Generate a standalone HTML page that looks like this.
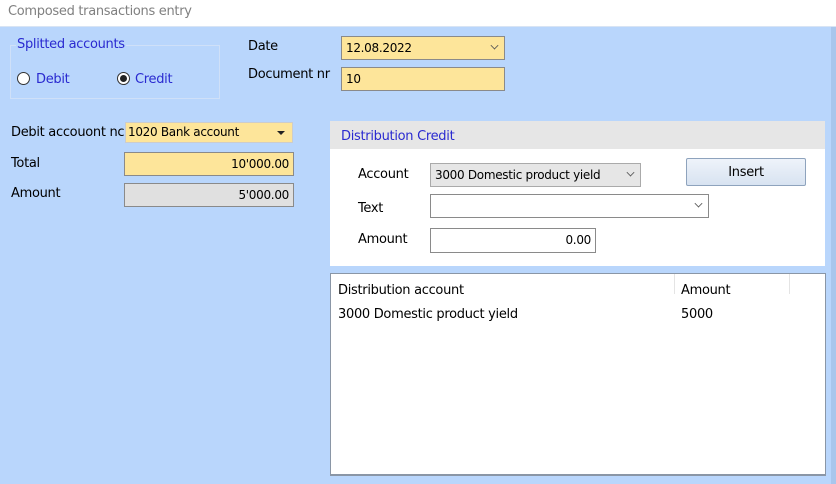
<!DOCTYPE html>
<html><head><meta charset="utf-8"><style>
*{margin:0;padding:0;box-sizing:border-box}
body{width:836px;height:484px;background:#b9d6fc;font-family:"DejaVu Sans","Liberation Sans",sans-serif;font-size:13px;color:#000;position:relative;overflow:hidden;letter-spacing:-0.3px}
.a{position:absolute;white-space:nowrap}
.title{left:0;top:0;width:836px;height:27px;background:#fff;border-bottom:1px solid #d8e4f4}
.box{position:absolute;border:1px solid #8a8a8a;font-size:12px;line-height:20px;padding:0 4px}
.y{background:#fde59a}
.blue{color:#2a2ad0}
.chev{position:absolute;right:6px;top:5px;width:7px;height:7px;border-right:1.2px solid #555;border-bottom:1.2px solid #555;transform:rotate(45deg) scale(.8)}
.rad{position:absolute;width:13px;height:13px;border:1px solid #333;border-radius:50%;background:#fff}
</style></head><body>
<div class="a title"></div>
<div class="a" style="left:8px;top:4px;color:#808080;font-size:13px">Composed transactions entry</div>
<div class="a" style="right:0;top:27px;width:5px;height:457px;background:#a9c6ec"></div>

<div class="a" style="left:10px;top:45px;width:210px;height:54px;border:1px solid #cfe0f8"></div>
<div class="a blue" style="left:16px;top:37px;background:#b9d6fc;padding:0 1px">Splitted accounts</div>
<div class="rad" style="left:17px;top:72px"></div>
<div class="a blue" style="left:36px;top:72px">Debit</div>
<div class="rad" style="left:117px;top:72px"><div style="position:absolute;left:2px;top:2px;width:7px;height:7px;border-radius:50%;background:#222"></div></div>
<div class="a blue" style="left:135px;top:72px">Credit</div>

<div class="a" style="left:248px;top:39px">Date</div>
<div class="box y" style="left:341px;top:36px;width:164px;height:24px;line-height:22px">12.08.2022<div class="chev"></div></div>
<div class="a" style="left:248px;top:67px">Document nr</div>
<div class="box y" style="left:341px;top:67px;width:164px;height:24px;line-height:22px">10</div>

<div class="a" style="left:11px;top:125px">Debit accouont nc</div>
<div class="box y" style="left:125px;top:122px;width:168px;height:21px;line-height:19px;padding-left:2px;border-color:#ccc">1020 Bank account<div style="position:absolute;right:7px;top:8px;border:4px solid transparent;border-top:4px solid #222;border-bottom:0"></div></div>
<div class="a" style="left:11px;top:156px">Total</div>
<div class="box y" style="left:124px;top:152px;width:170px;height:24px;line-height:22px;text-align:right">10'000.00</div>
<div class="a" style="left:11px;top:186px">Amount</div>
<div class="box" style="left:124px;top:183px;width:170px;height:24px;line-height:22px;text-align:right;background:#e0e0e0">5'000.00</div>

<div class="a" style="left:330px;top:121px;width:495px;height:145px;background:#fff"></div>
<div class="a" style="left:330px;top:121px;width:495px;height:28px;background:#e6e6e6"></div>
<div class="a blue" style="left:341px;top:129px">Distribution Credit</div>
<div class="a" style="left:358px;top:167px">Account</div>
<div class="box" style="left:430px;top:163px;width:211px;height:24px;line-height:22px;background:#e6e6e6;border-color:#aaa">3000 Domestic product yield<div class="chev"></div></div>
<div class="a" style="left:686px;top:158px;width:120px;height:28px;border:1px solid #8ea3bd;border-radius:2px;background:linear-gradient(#eef3fa,#d8e3f1);text-align:center;line-height:28px">Insert</div>
<div class="a" style="left:358px;top:201px">Text</div>
<div class="box" style="left:430px;top:194px;width:279px;height:24px;background:#fff"><div class="chev"></div></div>
<div class="a" style="left:358px;top:232px">Amount</div>
<div class="box" style="left:430px;top:228px;width:166px;height:25px;line-height:23px;text-align:right;background:#fff">0.00</div>

<div class="a" style="left:330px;top:273px;width:496px;height:203px;background:#fff;border:1px solid #8a96a6;border-bottom:2px solid #8a96a6"></div>
<div class="a" style="left:674px;top:274px;width:1px;height:20px;background:#e4e4e4"></div>
<div class="a" style="left:789px;top:274px;width:1px;height:20px;background:#e4e4e4"></div>
<div class="a" style="left:338px;top:283px">Distribution account</div>
<div class="a" style="left:681px;top:283px">Amount</div>
<div class="a" style="left:338px;top:307px">3000 Domestic product yield</div>
<div class="a" style="left:681px;top:307px">5000</div>
</body></html>
